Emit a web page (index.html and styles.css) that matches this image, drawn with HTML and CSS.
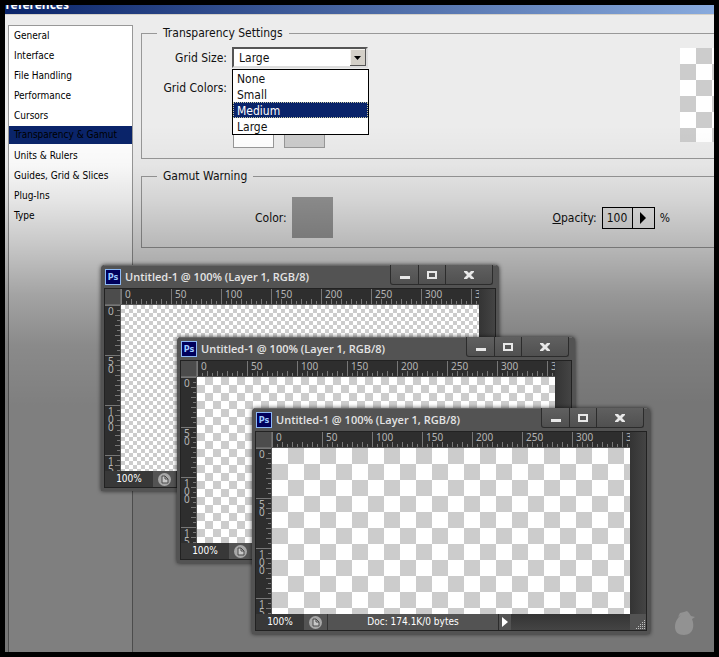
FILE: index.html
```
<!DOCTYPE html>
<html lang="en">
  <head>
    <meta charset="UTF-8" />
    <meta name="viewport" content="width=device-width, initial-scale=1.0" />
    <title>Preferences</title>
    <link rel="stylesheet" href="styles.css" />
  </head>
  <body>
    <div class="screen">
      <header class="titlebar"><h1>Preferences</h1></header>

      <div class="preferences">
        <nav class="sidebar">
          <a href="#general">General</a>
          <a href="#interface">Interface</a>
          <a href="#files">File Handling</a>
          <a href="#performance">Performance</a>
          <a href="#cursors">Cursors</a>
          <a href="#transparency" class="active">Transparency &amp; Gamut</a>
          <a href="#units">Units &amp; Rulers</a>
          <a href="#guides">Guides, Grid &amp; Slices</a>
          <a href="#plugins">Plug-Ins</a>
          <a href="#type">Type</a>
        </nav>

        <main class="settings">
          <fieldset class="group transparency">
            <legend>Transparency Settings</legend>
            <div class="group-body">
              <div class="form-grid">
                <label for="grid-size">Grid Size:</label>
                <div class="dropdown">
                  <select id="grid-size">
                    <option>None</option>
                    <option>Small</option>
                    <option>Medium</option>
                    <option selected>Large</option>
                  </select>
                  <ul class="dropdown-list" role="listbox" aria-label="Grid Size">
                    <li role="option">None</li>
                    <li role="option">Small</li>
                    <li role="option" class="selected" aria-selected="true">Medium</li>
                    <li role="option">Large</li>
                  </ul>
                </div>
                <label for="grid-colors">Grid Colors:</label>
                <select id="grid-colors"></select>
                <div class="swatches">
                  <button type="button" class="swatch white" aria-label="First grid color"></button>
                  <button type="button" class="swatch gray" aria-label="Second grid color"></button>
                </div>
              </div>
              <div class="preview checks-large"></div>
            </div>
          </fieldset>

          <fieldset class="group gamut">
            <legend>Gamut Warning</legend>
            <div class="group-body">
              <div class="color-field">
                <span id="color-label">Color:</span>
                <button type="button" class="swatch warning" aria-labelledby="color-label"></button>
              </div>
              <div class="opacity-field">
                <label for="opacity"><u>O</u>pacity:</label>
                <div class="stepper">
                  <input type="text" id="opacity" value="100" />
                  <button type="button" aria-label="Change opacity">
                    <svg width="6" height="12" viewBox="0 0 6 12"><path d="M0 0l6 6-6 6z" /></svg>
                  </button>
                </div>
                <span>%</span>
              </div>
            </div>
          </fieldset>
        </main>
      </div>

      <!-- Small grid -->
      <section class="window window-small">
        <div class="window-title">
          <span class="ps-icon">Ps</span>
          <h2>Untitled-1 @ 100% (Layer 1, RGB/8)</h2>
          <div class="window-buttons">
            <button type="button" aria-label="Minimize"><svg width="12" height="10" viewBox="0 0 12 10"><path d="M1 6h10v3H1z" /></svg></button>
            <button type="button" aria-label="Maximize"><svg width="12" height="10" viewBox="0 0 12 10"><path fill-rule="evenodd" d="M1 1h10v8H1zM3 3v4h6V3z" /></svg></button>
            <button type="button" aria-label="Close"><svg width="12" height="10" viewBox="0 0 12 10"><path d="M1 1h3l2 2 2-2h3v1L8 5l3 3v1H8L6 7 4 9H1V8l3-3-3-3z" /></svg></button>
          </div>
        </div>
        <div class="window-body">
          <div class="corner"></div>
          <div class="ruler-x"><span>0</span><span>50</span><span>100</span><span>150</span><span>200</span><span>250</span><span>300</span><span>350</span></div>
          <div class="gutter"></div>
          <div class="ruler-y"><span>0</span><span>5<br />0</span><span>1<br />0<br />0</span><span>1<br />5<br />0</span></div>
          <div class="canvas checks-small"></div>
          <div class="status">
            <span class="zoom">100%</span>
            <span class="doc-icon"><svg width="13" height="13" viewBox="0 0 13 13"><circle cx="6.500" cy="6.500" r="6.500" fill="#a8a8a8" /><path d="M4 3h3l3 3v4H4z" fill="#c8c8c8" stroke="#4a4a4a" /><path d="M7 3v3h3" fill="none" stroke="#4a4a4a" /></svg></span>
            <span class="doc-size">Doc: 174.1K/0 bytes</span>
            <button type="button" aria-label="Status options"><svg width="6" height="10" viewBox="0 0 6 10"><path d="M0 0l6 5-6 5z" /></svg></button>
          </div>
        </div>
      </section>

      <!-- Medium grid -->
      <section class="window window-medium">
        <div class="window-title">
          <span class="ps-icon">Ps</span>
          <h2>Untitled-1 @ 100% (Layer 1, RGB/8)</h2>
          <div class="window-buttons">
            <button type="button" aria-label="Minimize"><svg width="12" height="10" viewBox="0 0 12 10"><path d="M1 6h10v3H1z" /></svg></button>
            <button type="button" aria-label="Maximize"><svg width="12" height="10" viewBox="0 0 12 10"><path fill-rule="evenodd" d="M1 1h10v8H1zM3 3v4h6V3z" /></svg></button>
            <button type="button" aria-label="Close"><svg width="12" height="10" viewBox="0 0 12 10"><path d="M1 1h3l2 2 2-2h3v1L8 5l3 3v1H8L6 7 4 9H1V8l3-3-3-3z" /></svg></button>
          </div>
        </div>
        <div class="window-body">
          <div class="corner"></div>
          <div class="ruler-x"><span>0</span><span>50</span><span>100</span><span>150</span><span>200</span><span>250</span><span>300</span><span>350</span></div>
          <div class="gutter"></div>
          <div class="ruler-y"><span>0</span><span>5<br />0</span><span>1<br />0<br />0</span><span>1<br />5<br />0</span></div>
          <div class="canvas checks-medium"></div>
          <div class="status">
            <span class="zoom">100%</span>
            <span class="doc-icon"><svg width="13" height="13" viewBox="0 0 13 13"><circle cx="6.500" cy="6.500" r="6.500" fill="#a8a8a8" /><path d="M4 3h3l3 3v4H4z" fill="#c8c8c8" stroke="#4a4a4a" /><path d="M7 3v3h3" fill="none" stroke="#4a4a4a" /></svg></span>
            <span class="doc-size">Doc: 174.1K/0 bytes</span>
            <button type="button" aria-label="Status options"><svg width="6" height="10" viewBox="0 0 6 10"><path d="M0 0l6 5-6 5z" /></svg></button>
          </div>
        </div>
      </section>

      <!-- Large grid -->
      <section class="window window-large">
        <div class="window-title">
          <span class="ps-icon">Ps</span>
          <h2>Untitled-1 @ 100% (Layer 1, RGB/8)</h2>
          <div class="window-buttons">
            <button type="button" aria-label="Minimize"><svg width="12" height="10" viewBox="0 0 12 10"><path d="M1 6h10v3H1z" /></svg></button>
            <button type="button" aria-label="Maximize"><svg width="12" height="10" viewBox="0 0 12 10"><path fill-rule="evenodd" d="M1 1h10v8H1zM3 3v4h6V3z" /></svg></button>
            <button type="button" aria-label="Close"><svg width="12" height="10" viewBox="0 0 12 10"><path d="M1 1h3l2 2 2-2h3v1L8 5l3 3v1H8L6 7 4 9H1V8l3-3-3-3z" /></svg></button>
          </div>
        </div>
        <div class="window-body">
          <div class="corner"></div>
          <div class="ruler-x"><span>0</span><span>50</span><span>100</span><span>150</span><span>200</span><span>250</span><span>300</span><span>350</span></div>
          <div class="gutter"></div>
          <div class="ruler-y"><span>0</span><span>5<br />0</span><span>1<br />0<br />0</span><span>1<br />5<br />0</span></div>
          <div class="canvas checks-large"></div>
          <div class="status">
            <span class="zoom">100%</span>
            <span class="doc-icon"><svg width="13" height="13" viewBox="0 0 13 13"><circle cx="6.500" cy="6.500" r="6.500" fill="#a8a8a8" /><path d="M4 3h3l3 3v4H4z" fill="#c8c8c8" stroke="#4a4a4a" /><path d="M7 3v3h3" fill="none" stroke="#4a4a4a" /></svg></span>
            <span class="doc-size">Doc: 174.1K/0 bytes</span>
            <button type="button" aria-label="Status options"><svg width="6" height="10" viewBox="0 0 6 10"><path d="M0 0l6 5-6 5z" /></svg></button>
            <span class="grip"></span>
          </div>
        </div>
      </section>

      <svg class="mark" width="22" height="26" viewBox="0 0 22 26"><path d="M1 17C1 10 5 7 7 5L4 7l2-4 4-1 3-1 2 2 2 3 4 1-3 2c3 7 1 16-8 16C4 25 1 22 1 17z" /></svg>
    </div>
  </body>
</html>
```
FILE: styles.css
```
* {
  box-sizing: border-box;
}

body {
  margin: 0;
  background-color: #000;
  color: #111;
  font-family: "DejaVu Sans Condensed", "Noto Sans", sans-serif;
  font-size: 12px;
  line-height: 16px;
}

button,
input,
select {
  font: inherit;
  color: inherit;
}

button {
  padding: 0;
  border: none;
  background: none;
}

svg {
  display: block;
}

.screen {
  position: relative;
  display: flex;
  flex-direction: column;
  min-height: 100vh;
  border: 5px solid #000;
  background-color: #ececec;
  overflow: hidden;
}

/* Title bar, scrolled partly out of view */
.titlebar {
  display: flex;
  align-items: flex-end;
  height: 10px;
  border-bottom: 1px solid #d4d0c8;
  background: linear-gradient(to right, #0a246a, #88aadd);
  overflow: hidden;
}

.titlebar h1 {
  margin: 0 0 0 -7px;
  color: #fff;
  font-family: "Noto Sans", sans-serif;
  font-size: 12px;
  line-height: 18px;
}

.preferences {
  display: flex;
  flex: 1;
  gap: 8px;
  padding: 10px 0 0 3px;
}

/* Shade running down over the dialog */
.preferences::after {
  content: "";
  position: absolute;
  inset: 0;
  background: linear-gradient(
    rgba(0, 0, 0, 0) 120px,
    rgba(0, 0, 0, 0.03) 160px,
    rgba(0, 0, 0, 0.1) 195px,
    rgba(0, 0, 0, 0.22) 240px,
    rgba(0, 0, 0, 0.36) 290px,
    rgba(0, 0, 0, 0.46) 340px,
    rgba(0, 0, 0, 0.5) 400px
  );
  pointer-events: none;
}

.sidebar {
  flex: 0 0 125px;
  border: 1px solid #989898;
  border-bottom: none;
  background-color: #fff;
  font-size: 10px;
}

.sidebar a {
  display: block;
  padding-left: 5px;
  color: #000;
  line-height: 20px;
  text-decoration: none;
  white-space: nowrap;
}

.sidebar a.active {
  margin-bottom: 2px;
  background-color: #0a246a;
  line-height: 18px;
}

/* Settings groups */
.settings {
  flex: 1;
  min-width: 0;
}

.group {
  margin: 0 0 9px;
  padding: 0;
  border: 1px solid #989898;
  border-right: none;
}

.group legend {
  margin-left: 15px;
  padding: 0 6px;
}

.group-body {
  display: flex;
}

.transparency .group-body {
  padding: 6px 0 10px;
}

.form-grid {
  display: grid;
  grid-template-columns: 85px 136px;
  gap: 9px 5px;
  align-items: center;
}

.form-grid label {
  text-align: right;
}

.dropdown {
  position: relative;
}

select {
  display: block;
  width: 100%;
  height: 21px;
  padding: 0 5px;
  appearance: none;
  border: 2px solid;
  border-color: #555 #ddd #ddd #555;
  border-radius: 0;
  background: #fff
    url("data:image/svg+xml,%3Csvg xmlns='http://www.w3.org/2000/svg' width='16' height='17'%3E%3Cpath d='M0 0h16v17H0z' fill='%23555'/%3E%3Cpath d='M0 0h15v16H0z' fill='%23f4f2ee'/%3E%3Cpath d='M1 1h14v15H1z' fill='%23d4d0c8'/%3E%3Cpath d='M4 7h7l-3.500 4z'/%3E%3C/svg%3E")
    right center no-repeat;
}

.dropdown-list {
  position: absolute;
  top: 22px;
  left: 0;
  z-index: 1;
  width: 137px;
  margin: 0;
  padding: 0;
  border: 1px solid #000;
  background-color: #fff;
  list-style: none;
}

.dropdown-list li {
  height: 16px;
  padding-left: 4px;
  line-height: 18px;
}

.dropdown-list .selected {
  outline: 1px dotted #c8c8a0;
  outline-offset: -1px;
  background-color: #0a246a;
  color: #fff;
}

.swatches {
  display: flex;
  grid-column: 2;
  gap: 10px;
  padding-left: 1px;
}

.swatch {
  width: 41px;
  height: 41px;
  border: 1px solid #989898;
}

.swatch.white {
  background-color: #fff;
}

.swatch.gray {
  background-color: #ccc;
}

.swatch.warning {
  border: none;
  background-color: #989898;
}

.preview {
  width: 34px;
  height: 94px;
  margin: 1px 0 0 auto;
}

.gamut .group-body {
  align-items: center;
  justify-content: space-between;
  padding: 13px 44px 9px 113px;
}

.color-field,
.opacity-field {
  display: flex;
  align-items: center;
  gap: 5px;
}

.stepper {
  display: flex;
  width: 53px;
  height: 22px;
  border: 1px solid #000;
}

.stepper input {
  width: 30px;
  padding: 0 4px;
  border: none;
  border-right: 1px solid #000;
  background-color: #e6e6e6;
}

.stepper button {
  display: flex;
  flex: 1;
  align-items: center;
  justify-content: center;
}

/* Transparency grids */
.checks-small,
.checks-medium,
.checks-large {
  background: conic-gradient(#ccc 25%, #fff 0 50%, #ccc 0 75%, #fff 0);
}

.checks-small {
  background-size: 8px 8px;
}

.checks-medium {
  background-size: 16px 16px;
}

.checks-large {
  background-size: 32px 32px;
}

/* Document windows */
.window {
  position: absolute;
  width: 398px;
  padding: 0 3px 3px;
  border-radius: 4px 4px 0 0;
  background-color: #535353;
  box-shadow: 0 0 4px rgba(0, 0, 0, 0.7);
}

.window-small {
  top: 260px;
  left: 96px;
}

.window-medium {
  top: 332px;
  left: 172px;
}

.window-large {
  top: 403px;
  left: 247px;
}

.window-title {
  display: flex;
  align-items: flex-start;
  height: 23px;
  padding: 0 3px 0 1px;
  box-shadow: inset 0 1px #686868;
}

.ps-icon {
  width: 16px;
  height: 16px;
  margin-top: 4px;
  border: 1px solid #8cb8f4;
  background-color: #00005c;
  color: #9cc8ff;
  font-size: 9px;
  font-weight: bold;
  line-height: 14px;
  text-align: center;
}

.window-title h2 {
  flex: 1;
  margin: 0 0 0 4px;
  color: #e4e4e4;
  font-family: "Open Sans", "Noto Sans", sans-serif;
  font-size: 11px;
  font-weight: 600;
  line-height: 24px;
  white-space: nowrap;
}

.window-buttons {
  display: flex;
  height: 20px;
  border: 1px solid #2c2c2c;
  border-top: none;
  border-radius: 0 0 3px 3px;
  background: linear-gradient(#606060, #505050);
}

.window-buttons button {
  display: flex;
  align-items: center;
  justify-content: center;
  width: 27px;
  border-left: 1px solid #2c2c2c;
  fill: #e8e8e8;
}

.window-buttons button:first-child {
  border-left: none;
}

.window-buttons button:last-child {
  width: 47px;
}

.window-body {
  display: grid;
  grid-template-columns: 16px 1fr 16px;
  grid-template-rows: 16px 166px 16px;
  border: 1px solid #222;
  background-color: #404040;
}

.corner {
  border-right: 1px solid #686868;
  border-bottom: 1px solid #686868;
  background-color: #4c4c4c;
}

.ruler-x,
.ruler-y {
  display: flex;
  background-color: #2e2e2e;
  color: #b4b4b4;
  font-family: "Noto Sans", sans-serif;
  font-size: 10px;
  overflow: hidden;
}

.ruler-x {
  border-bottom: 1px solid #555;
}

.ruler-x span {
  flex: 0 0 50px;
  padding-left: 4px;
  background:
    repeating-linear-gradient(to right, #777 0 1px, transparent 1px 10px) 0 100% / 100% 5px no-repeat,
    repeating-linear-gradient(to right, #777 0 1px, transparent 1px 5px) 0 100% / 100% 3px no-repeat,
    linear-gradient(#777, #777) 0 0 / 1px 100% no-repeat;
  line-height: 11px;
}

.ruler-y {
  flex-direction: column;
  border-right: 1px solid #555;
}

.ruler-y span {
  flex: 0 0 50px;
  padding: 2px 0 0 3px;
  background:
    repeating-linear-gradient(#777 0 1px, transparent 1px 10px) 100% 0 / 5px 100% no-repeat,
    repeating-linear-gradient(#777 0 1px, transparent 1px 5px) 100% 0 / 3px 100% no-repeat,
    linear-gradient(#777, #777) 0 0 / 100% 1px no-repeat;
  line-height: 8px;
}

.gutter {
  grid-row: 1 / 3;
  grid-column: 3;
  background: linear-gradient(to right, #343434, #444);
}

.status {
  display: flex;
  grid-column: 1 / 4;
  background: linear-gradient(#343434, #444);
  color: #fff;
  font-size: 10px;
}

.status .zoom {
  width: 48px;
  background-color: #383838;
  text-align: center;
}

.status .doc-icon {
  display: flex;
  align-items: center;
  justify-content: center;
  width: 24px;
  border-right: 1px solid #333;
  background-color: #535353;
}

.status .doc-size {
  width: 171px;
  border-right: 1px solid #2c2c2c;
  background-color: #535353;
  text-align: center;
}

.status button {
  display: flex;
  align-items: center;
  justify-content: center;
  width: 12px;
  background-color: #535353;
  fill: #fff;
}

.status .grip {
  width: 16px;
  margin-left: auto;
  background:
    linear-gradient(135deg, #535353 60%, transparent 60%),
    repeating-conic-gradient(#535353 0 75%, #c0c0c0 0 100%) 0 0 / 2px 2px;
}

.mark {
  position: absolute;
  right: 18px;
  bottom: 16px;
  fill: #929292;
}
```
